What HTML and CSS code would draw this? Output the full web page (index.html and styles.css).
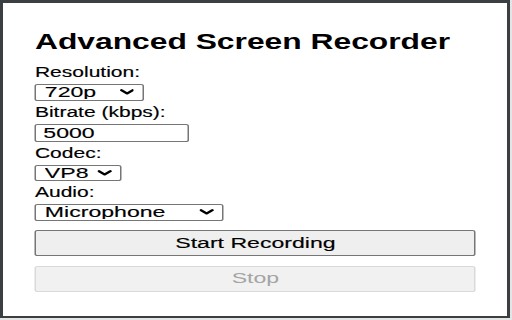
FILE: index.html
```html
<!DOCTYPE html>
<html lang="en">
<head>
<meta charset="utf-8">
<title>Advanced Screen Recorder</title>
<link rel="stylesheet" href="styles.css">
</head>
<body>
<div class="screen">
  <div class="window">
    <div class="popup">
      <h1 class="title">Advanced Screen Recorder</h1>
      <form class="form">
        <label class="field-label" for="res">Resolution:</label>
        <div class="select-wrap w-res">
          <select id="res" class="select"><option>720p</option><option>1080p</option></select>
          <svg class="chev" viewBox="0 0 10 6" aria-hidden="true"><path d="M1.1 1.1 L5 4.6 L8.9 1.1" fill="none" stroke="#000" stroke-width="2.2" stroke-linecap="round" stroke-linejoin="round"/></svg>
        </div>

        <label class="field-label" for="bitrate">Bitrate (kbps):</label>
        <input id="bitrate" class="text-input" type="text" value="5000">

        <label class="field-label" for="codec">Codec:</label>
        <div class="select-wrap w-codec">
          <select id="codec" class="select"><option>VP8</option><option>VP9</option></select>
          <svg class="chev" viewBox="0 0 10 6" aria-hidden="true"><path d="M1.1 1.1 L5 4.6 L8.9 1.1" fill="none" stroke="#000" stroke-width="2.2" stroke-linecap="round" stroke-linejoin="round"/></svg>
        </div>

        <label class="field-label" for="audio">Audio:</label>
        <div class="select-wrap w-audio">
          <select id="audio" class="select"><option>Microphone</option><option>System</option></select>
          <svg class="chev" viewBox="0 0 10 6" aria-hidden="true"><path d="M1.1 1.1 L5 4.6 L8.9 1.1" fill="none" stroke="#000" stroke-width="2.2" stroke-linecap="round" stroke-linejoin="round"/></svg>
        </div>

        <button type="button" class="btn btn-start">Start Recording</button>
        <button type="button" class="btn btn-stop" disabled>Stop</button>
      </form>
    </div>
  </div>
</div>
</body>
</html>
```

FILE: styles.css
```css
* { box-sizing: border-box; }

html, body {
  margin: 0;
  padding: 0;
  width: 512px;
  height: 320px;
  overflow: hidden;
}

body {
  background: #e4e6e6;
  font-family: "Liberation Sans", Arial, sans-serif;
  color: #000;
}

.screen {
  width: 512px;
  height: 320px;
  display: flex;
  align-items: flex-start;
}

.window {
  width: 510px;
  height: 318px;
  background: #fff;
  border-top: 3px solid #3b3f42;
  border-left: 3px solid #3b3f42;
  border-right: 3px solid #3b3f42;
  border-bottom: 2px solid #3b3f42;
  overflow: hidden;
}

.popup {
  width: 336px;
  transform: scaleX(1.5);
  transform-origin: 0 0;
  padding: 26.5px 20.7px 0 21.3px;
}

.title {
  margin: 0 0 10.5px 0;
  font-size: 21.2px;
  line-height: 24px;
  font-weight: bold;
  white-space: nowrap;
}

.form {
  display: flex;
  flex-direction: column;
  align-items: flex-start;
}

.field-label {
  display: block;
  font-size: 14px;
  line-height: 16px;
  white-space: nowrap;
  -webkit-text-stroke: 0.15px #000;
}

.select-wrap {
  position: relative;
  margin: 4px 0 3px 0;
  height: 16.5px;
}

.w-res { width: 72.7px; }
.w-codec { width: 58px; }
.w-audio { width: 126px; }

.select {
  appearance: none;
  -webkit-appearance: none;
  display: block;
  width: 100%;
  height: 100%;
  margin: 0;
  padding: 0 0 0 5.6px;
  border: 1px solid #767676;
  border-radius: 2px;
  background: #fff;
  color: #000;
  font-family: "Liberation Sans", Arial, sans-serif;
  font-size: 15.4px;
  line-height: 14px;
  -webkit-text-stroke: 0.15px #000;
}

.chev {
  position: absolute;
  right: 6.5px;
  top: 5.3px;
  width: 9.5px;
  height: 6px;
  pointer-events: none;
}

.text-input {
  display: block;
  width: 102.7px;
  height: 18px;
  margin: 4px 0 3px 0;
  padding: 0 0 0 4.6px;
  border: 1px solid #767676;
  border-radius: 2px;
  background: #fff;
  color: #000;
  font-family: "Liberation Sans", Arial, sans-serif;
  font-size: 15.4px;
  line-height: 16px;
  outline: none;
  -webkit-text-stroke: 0.15px #000;
}

.btn {
  display: flex;
  align-items: center;
  justify-content: center;
  width: 294px;
  height: 26.5px;
  margin: 0;
  padding: 0 0 1px 0;
  border-radius: 2px;
  font-family: "Liberation Sans", Arial, sans-serif;
  font-size: 15.4px;
  line-height: 16px;
}

.btn-start {
  margin-top: 6.3px;
  background: #efefef;
  border: 1px solid #767676;
  color: #000;
  -webkit-text-stroke: 0.15px #000;
}

.btn-stop {
  margin-top: 9.3px;
  background: #f1f1f1;
  border: 1px solid #dadada;
  color: #a4a4a4;
}
```
